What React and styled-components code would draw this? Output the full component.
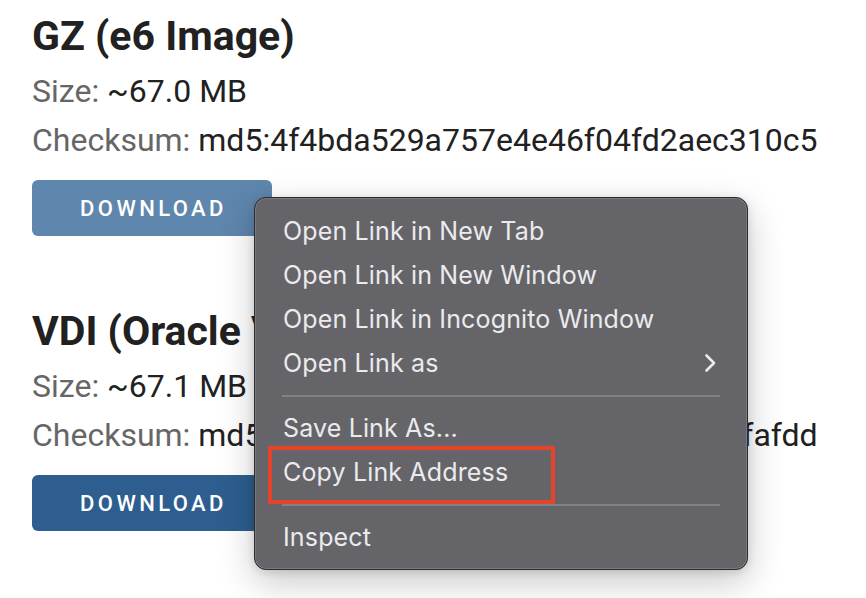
import React from "react";
import styled, { createGlobalStyle } from "styled-components";

const Global = createGlobalStyle`
  html, body { margin: 0; padding: 0; background: #ffffff; }
  body { font-family: Roboto, "Liberation Sans", sans-serif; }
  * { box-sizing: border-box; }
`;

const Page = styled.div`
  position: relative;
  width: 866px;
  height: 598px;
  overflow: hidden;
  padding: 12px 0 0 32px;
  background: #ffffff;
`;

const Block = styled.section`
  display: flex;
  flex-direction: column;
  align-items: flex-start;
  margin-bottom: 71px;
`;

const Title = styled.h2`
  margin: 0 0 8px;
  font-family: Roboto, "Liberation Sans", sans-serif;
  font-weight: 700;
  font-size: 41px;
  line-height: 48px;
  color: #212121;
  white-space: nowrap;
`;

const Line = styled.div`
  font-size: 32px;
  line-height: 49px;
  margin-top: -1px;
  margin-bottom: 1px;
  color: #212121;
  white-space: nowrap;
`;

const Label = styled.span`
  color: #666666;
`;

const Button = styled.button`
  margin-top: 14px;
  width: 240px;
  height: 56px;
  border: none;
  border-radius: 6px;
  background: ${(p) => (p.$faded ? "#5f86ad" : "#2d5e8f")};
  color: #ffffff;
  font-family: Roboto, "Liberation Sans", sans-serif;
  font-weight: 500;
  font-size: 22px;
  letter-spacing: 3.4px;
  padding: 0 0 0 3px;
  text-transform: uppercase;
`;

const Menu = styled.div`
  position: absolute;
  left: 254px;
  top: 197px;
  width: 494px;
  height: 373px;
  padding: 11px 0 9px;
  background: #656469;
  border: 1px solid #2b2b2d;
  border-radius: 12px;
  box-shadow: inset 0 0 0 1px rgba(255, 255, 255, 0.14),
    0 12px 36px rgba(0, 0, 0, 0.22), 0 2px 8px rgba(0, 0, 0, 0.12);
  font-family: Inter, "Noto Sans", sans-serif;
`;

const Item = styled.div`
  position: relative;
  display: flex;
  align-items: center;
  justify-content: space-between;
  height: 44px;
  padding: 0 30px 0 28px;
  font-size: 25px;
  line-height: 44px;
  letter-spacing: 0.15px;
  color: #ebebed;
  white-space: nowrap;
`;

const Separator = styled.div`
  height: 21px;
  display: flex;
  align-items: center;
  padding: 0 27px 0 27px;
  &::after {
    content: "";
    flex: 1;
    height: 2px;
    background: #828186;
  }
`;

const Highlight = styled.div`
  position: absolute;
  left: 13px;
  top: -4px;
  width: 287px;
  height: 58px;
  border: 4px solid #e5432b;
  pointer-events: none;
`;

const Chevron = () => (
  <svg width="13" height="20" viewBox="0 0 13 20" fill="none">
    <path
      d="M2.5 2.5 L10 10 L2.5 17.5"
      stroke="#ebebed"
      strokeWidth="2.6"
      strokeLinecap="round"
      strokeLinejoin="round"
    />
  </svg>
);

const downloads = [
  {
    title: "GZ (e6 Image)",
    size: "~67.0 MB",
    sum: "md5:4f4bda529a757e4e46f04fd2aec310c5",
    faded: true,
  },
  {
    title: "VDI (Oracle VirtualBox Image)",
    size: "~67.1 MB",
    sum: "md5:8c2e1b7a90d4f3e6a15b7c9d02efafdd",
    faded: false,
  },
];

export default function App() {
  return (
    <>
      <Global />
      <Page>
        {downloads.map((d) => (
          <Block key={d.title}>
            <Title>{d.title}</Title>
            <Line>
              <Label>Size:</Label> {d.size}
            </Line>
            <Line>
              <Label>Checksum:</Label> {d.sum}
            </Line>
            <Button $faded={d.faded}>Download</Button>
          </Block>
        ))}
        <Menu>
          <Item>Open Link in New Tab</Item>
          <Item>Open Link in New Window</Item>
          <Item>Open Link in Incognito Window</Item>
          <Item>
            Open Link as
            <Chevron />
          </Item>
          <Separator />
          <Item>Save Link As...</Item>
          <Item>
            Copy Link Address
            <Highlight />
          </Item>
          <Separator />
          <Item>Inspect</Item>
        </Menu>
      </Page>
    </>
  );
}
